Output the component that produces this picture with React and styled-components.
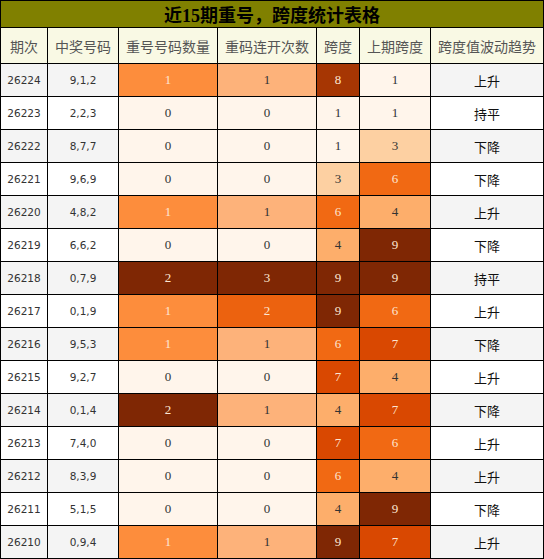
import styled, { createGlobalStyle } from "styled-components";

const GlobalStyle = createGlobalStyle`
  html, body {
    margin: 0;
    padding: 0;
    background: #fff;
  }
`;

const rows = [
  ['26224', '9,1,2', 1, 1, 8, 1, '上升'],
  ['26223', '2,2,3', 0, 0, 1, 1, '持平'],
  ['26222', '8,7,7', 0, 0, 1, 3, '下降'],
  ['26221', '9,6,9', 0, 0, 3, 6, '下降'],
  ['26220', '4,8,2', 1, 1, 6, 4, '上升'],
  ['26219', '6,6,2', 0, 0, 4, 9, '下降'],
  ['26218', '0,7,9', 2, 3, 9, 9, '持平'],
  ['26217', '0,1,9', 1, 2, 9, 6, '上升'],
  ['26216', '9,5,3', 1, 1, 6, 7, '下降'],
  ['26215', '9,2,7', 0, 0, 7, 4, '上升'],
  ['26214', '0,1,4', 2, 1, 4, 7, '下降'],
  ['26213', '7,4,0', 0, 0, 7, 6, '上升'],
  ['26212', '8,3,9', 0, 0, 6, 4, '上升'],
  ['26211', '5,1,5', 0, 0, 4, 9, '下降'],
  ['26210', '0,9,4', 1, 1, 9, 7, '上升'],
];

// colour scales per column (Oranges)
const repeatScale = { 0: '#fff5eb', 1: '#fd8d3c', 2: '#7f2704' };
const runScale = { 0: '#fff5eb', 1: '#fdb27a', 2: '#ec620f', 3: '#7f2704' };
const spanScale = {
  1: '#fff5eb', 3: '#fdd0a2', 4: '#fdae6b', 6: '#f16913',
  7: '#d94801', 8: '#a63603', 9: '#7f2704',
};

const darkBgs = ['#fd8d3c', '#ec620f', '#f16913', '#d94801', '#a63603', '#7f2704'];

const headers = ['期次', '中奖号码', '重号号码数量', '重码连开次数', '跨度', '上期跨度', '跨度值波动趋势'];

const HeatCell = ({ bg, children }) => (
  <Heat $bg={bg} $light={darkBgs.includes(bg)}>{children}</Heat>
);

const App = () => {
  return (
    <>
      <GlobalStyle />
      <Board>
        <Title>近15期重号，跨度统计表格</Title>
        {headers.map((h) => (
          <Head key={h}>{h}</Head>
        ))}
        {rows.map((r, i) => {
          const alt = i % 2 === 0;
          return [
            <Plain key={r[0] + 'a'} $alt={alt}>{r[0]}</Plain>,
            <Plain key={r[0] + 'b'} $alt={alt}>{r[1]}</Plain>,
            <HeatCell key={r[0] + 'c'} bg={repeatScale[r[2]]}>{r[2]}</HeatCell>,
            <HeatCell key={r[0] + 'd'} bg={runScale[r[3]]}>{r[3]}</HeatCell>,
            <HeatCell key={r[0] + 'e'} bg={spanScale[r[4]]}>{r[4]}</HeatCell>,
            <HeatCell key={r[0] + 'f'} bg={spanScale[r[5]]}>{r[5]}</HeatCell>,
            <Trend key={r[0] + 'g'} $alt={alt}>{r[6]}</Trend>,
          ];
        })}
      </Board>
    </>
  );
};

export default App;

const Board = styled.div`
  display: grid;
  grid-template-columns: 46px 70px 98px 98px 42px 70px 112px;
  grid-template-rows: 26px 35px repeat(15, 32px);
  gap: 1px;
  padding: 1px;
  width: 544px;
  box-sizing: border-box;
  background: #000;
`;

const Cell = styled.div`
  display: flex;
  align-items: center;
  justify-content: center;
  white-space: nowrap;
  overflow: hidden;
`;

const Title = styled(Cell)`
  grid-column: 1 / -1;
  background: #808000;
  color: #000;
  font-family: "Liberation Serif", "Noto Sans CJK SC", serif;
  font-weight: bold;
  font-size: 18px;
`;

const Head = styled(Cell)`
  background: #f9f9e4;
  color: #555;
  font-family: "Noto Sans CJK SC", sans-serif;
  font-size: 14px;
`;

const Plain = styled(Cell)`
  background: ${(p) => (p.$alt ? '#f4f4f4' : '#fff')};
  color: #333;
  font-family: "DejaVu Sans", sans-serif;
  font-size: 10.5px;
`;

const Heat = styled(Cell)`
  background: ${(p) => p.$bg};
  color: ${(p) => (p.$light ? '#fde6d2' : '#333')};
  font-family: "Liberation Serif", serif;
  font-size: 13px;
`;

const Trend = styled(Cell)`
  background: ${(p) => (p.$alt ? '#f4f4f4' : '#fff')};
  color: #111;
  font-family: "Noto Sans CJK SC", sans-serif;
  font-size: 13px;
  padding-top: 1px;
`;
